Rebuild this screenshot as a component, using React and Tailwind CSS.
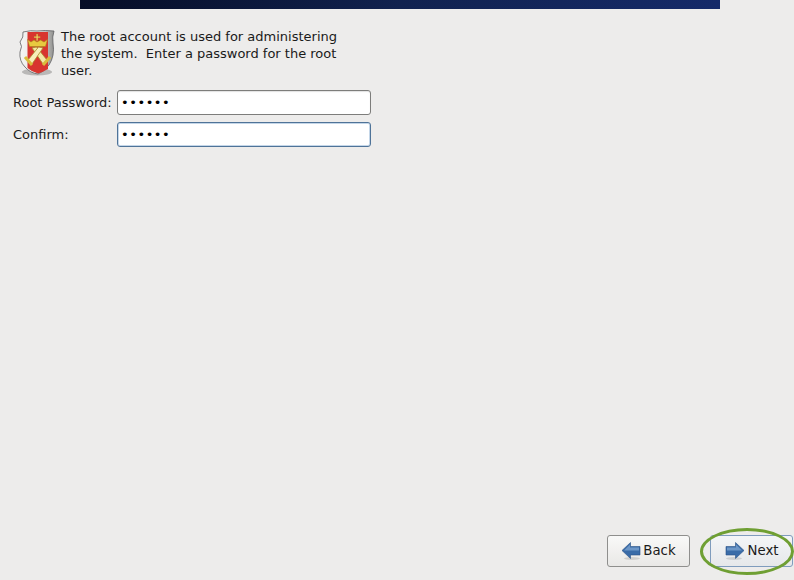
export default function App() {
  const Dots = () => (
    <span className="text-[13px] leading-none tracking-[0.55px] text-black">••••••</span>
  );
  return (
    <div className="relative flex h-[580px] w-[794px] flex-col overflow-hidden bg-[#edeceb] font-['DejaVu_Sans',sans-serif] text-[13px] leading-[17px] text-[#1a1a1a]">
      <div className="ml-[80px] h-[9px] w-[640px] shrink-0 bg-gradient-to-r from-[#060d26] via-[#11224f] to-[#152a69]" />
      <div className="flex items-start pl-[17px] pt-[19px]">
        <svg width="40" height="50" viewBox="0 0 40 50" className="shrink-0">
          <defs>
            <linearGradient id="sh" x1="0" x2="1" y1="0" y2="0">
              <stop offset="0" stopColor="#f6f6f4" />
              <stop offset="0.6" stopColor="#e0e0de" />
              <stop offset="1" stopColor="#8f8f8d" />
            </linearGradient>
          </defs>
          <ellipse cx="20" cy="44" rx="15" ry="3.5" fill="#000" opacity="0.22" />
          <path d="M6 4 Q14 2 20 3 Q28 2 37 3 Q35 9 36 15 Q38 28 32 37 Q27 44 21 46 Q13 45 8 39 Q2 33 3 24 Q6 18 3 14 Q7 9 6 4Z" fill="url(#sh)" stroke="#5f5f62" strokeWidth="0.8" />
          <path d="M10.5 4 L31 4 L31 41 Q25 44.5 21 45.5 Q15 44 10.5 40Z" fill="#d8352f" />
          <path d="M19.4 6h1.4v2.4h2.4v1.3h-2.4v3h-1.4v-3H17V8.4h2.4z" fill="#f5d96b" stroke="#a5801f" strokeWidth="0.3" />
          <path d="M10.5 11.5 L14 14 L17 12 L20 14 L23.5 12 L27 14 L30.5 11.5 L28.5 18.5 H12.5Z" fill="#e8c93f" stroke="#a5801f" strokeWidth="0.6" />
          <path d="M15 20 L19.5 19 L30 32 L26 36Z" fill="#f3e8a6" stroke="#a88a2a" strokeWidth="0.8" />
          <path d="M26 20 L21.5 19 L11 32 L15 36Z" fill="#f7efba" stroke="#a88a2a" strokeWidth="0.8" />
          <path d="M8 29 L15 37 M33 29 L26 37" stroke="#d9bd3c" strokeWidth="3" />
        </svg>
        <p className="ml-[4px] w-[282px]">
          The root account is used for administering the system.&nbsp; Enter a password for the root user.
        </p>
      </div>
      <div className="grid grid-cols-[104px_254px] items-center gap-y-[7px] pl-[13px] pt-[11px]">
        <label className="whitespace-nowrap">Root Password:</label>
        <div className="flex h-[25px] items-center rounded-[3px] border border-[#7d7d7b] bg-white pl-[3px] shadow-[inset_0_1px_1px_#e2e2e2]">
          <Dots />
        </div>
        <label>Confirm:</label>
        <div className="flex h-[25px] items-center rounded-[3px] border border-[#4f7398] bg-white pl-[3px] shadow-[inset_0_0_0_1px_#c4d6e8]">
          <Dots />
        </div>
      </div>
      <div className="mt-auto flex justify-end gap-[20px] pb-[13px] pr-[1px]">
        <button className="flex h-[32px] w-[83px] items-center justify-center gap-[2px] rounded-[3px] border border-[#8f8f8d] bg-gradient-to-b from-[#f9f9f8] to-[#e9e8e6] text-[#1a1a1a]">
          <svg width="20" height="20" viewBox="0 0 20 20" className="-mt-[1px]">
            <ellipse cx="11" cy="17.5" rx="8" ry="1.5" fill="#000" opacity="0.12" />
            <path d="M1 9.5 L9.5 1.5 V5.5 H19 V14 H9.5 V17.5Z" fill="#3a6ca8" stroke="#2a5287" strokeWidth="0.6" />
            <path d="M3 9.5 L9 3.5 V6.5 H18 V9.5Z" fill="#6d97c7" />
          </svg>
          <span className="-mt-[2px] text-[13.3px]">Back</span>
        </button>
        <button className="flex h-[32px] w-[83px] items-center justify-center gap-[3px] rounded-[3px] border border-[#7f9cbd] bg-gradient-to-b from-[#f3f5f7] to-[#e6e8ea] text-[#1a1a1a]">
          <svg width="20" height="20" viewBox="0 0 20 20" className="-mt-[1px]">
            <ellipse cx="9" cy="17.5" rx="8" ry="1.5" fill="#000" opacity="0.12" />
            <path d="M19 9.5 L10.5 1.5 V5.5 H1 V14 H10.5 V17.5Z" fill="#3a6ca8" stroke="#2a5287" strokeWidth="0.6" />
            <path d="M17 9.5 L11 3.5 V6.5 H2 V9.5Z" fill="#6d97c7" />
          </svg>
          <span className="-mt-[2px] text-[13.3px]">Next</span>
        </button>
      </div>
      <div className="absolute left-[700px] top-[528px] h-[47px] w-[94px] rounded-[50%] border-[3px] border-[#6f9f33]" />
    </div>
  );
}
